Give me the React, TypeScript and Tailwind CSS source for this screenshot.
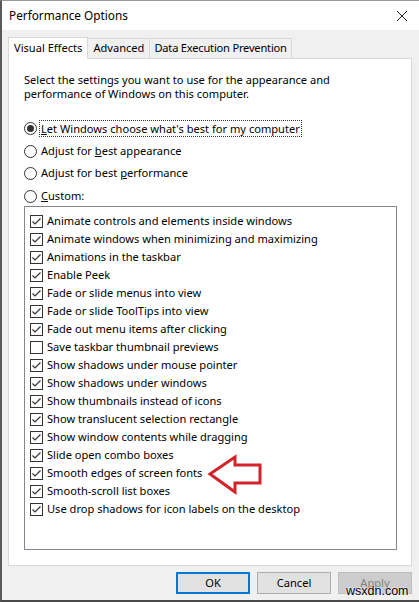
import React from 'react';

const effects: [string, boolean][] = [
  ['Animate controls and elements inside windows', true],
  ['Animate windows when minimizing and maximizing', true],
  ['Animations in the taskbar', true],
  ['Enable Peek', true],
  ['Fade or slide menus into view', true],
  ['Fade or slide ToolTips into view', true],
  ['Fade out menu items after clicking', true],
  ['Save taskbar thumbnail previews', false],
  ['Show shadows under mouse pointer', true],
  ['Show shadows under windows', true],
  ['Show thumbnails instead of icons', true],
  ['Show translucent selection rectangle', true],
  ['Show window contents while dragging', true],
  ['Slide open combo boxes', true],
  ['Smooth edges of screen fonts', true],
  ['Smooth-scroll list boxes', true],
  ['Use drop shadows for icon labels on the desktop', true],
];

function Radio({ checked, children }: { checked?: boolean; children: React.ReactNode }) {
  return (
    <div className="flex items-center h-[22.7px] whitespace-nowrap">
      <span className="w-[13px] h-[13px] rounded-full border border-[#333] bg-white flex items-center justify-center shrink-0">
        {checked && <span className="w-[7px] h-[7px] rounded-full bg-[#333]" />}
      </span>
      <span className={checked ? 'ml-[2px] px-[1px] border border-dotted border-[#333] leading-[15px]' : 'ml-[4px]'}>
        {children}
      </span>
    </div>
  );
}

function Checkbox({ checked, label }: { checked: boolean; label: string }) {
  return (
    <div className="flex items-center h-[18px] whitespace-nowrap">
      <span className="w-[13px] h-[13px] border border-[#333] bg-white flex items-center justify-center shrink-0">
        {checked && (
          <svg width="11" height="11" viewBox="0 0 11 11">
            <path d="M1.5 5.5 L4 8 L9.5 2.5" fill="none" stroke="#333" strokeWidth="1.2" />
          </svg>
        )}
      </span>
      <span className="ml-[4px]">{label}</span>
    </div>
  );
}

export default function App() {
  return (
    <div
      className="relative w-[419px] h-[602px] bg-[#f0f0f0] border-l-2 border-b-2 border-t border-l-[#5a5a5a] border-b-[#4a4a4a] border-t-[#9a9a9a] text-[11.1px] text-black overflow-hidden"
      style={{ fontFamily: '"Noto Sans", "Liberation Sans", sans-serif' }}
    >
      {/* Title bar */}
      <div className="h-[29px] bg-white flex items-center justify-between pl-[7px] pr-[11px]">
        <span className="text-[11.8px]">Performance Options</span>
        <svg width="12" height="12" viewBox="0 0 12 12">
          <path d="M1 1 L11 11 M11 1 L1 11" stroke="#222" strokeWidth="1" />
        </svg>
      </div>

      {/* Tabs */}
      <div className="flex items-end pl-[6px] pt-[6px] h-[28px] whitespace-nowrap">
        <div className="h-[22px] px-[5px] bg-white border border-b-0 border-[#d9d9d9] flex items-center relative z-10 -mb-px">
          Visual Effects
        </div>
        <div className="h-[20px] px-[5px] border border-l-0 border-b-0 border-[#d9d9d9] flex items-center">Advanced</div>
        <div className="h-[20px] px-[4px] border border-l-0 border-b-0 border-[#d9d9d9] flex items-center tracking-[-0.2px]">
          Data Execution Prevention
        </div>
      </div>

      {/* Panel */}
      <div className="ml-[6px] w-[404px] h-[508px] bg-white border border-[#d9d9d9] pl-[15px] pt-[14px]">
        <p className="leading-[14px]">
          Select the settings you want to use for the appearance and
          <br />
          performance of Windows on this computer.
        </p>
        <div className="mt-[16px]">
          <Radio checked>
            <u>L</u>et Windows choose what's best for my computer
          </Radio>
          <Radio>
            Adjust for <u>b</u>est appearance
          </Radio>
          <Radio>
            Adjust for best <u>p</u>erformance
          </Radio>
          <Radio>
            <u>C</u>ustom:
          </Radio>
        </div>
        <div className="mt-[-2px] w-[373px] h-[344px] border border-[#828790] pl-[5px] pt-[6px]">
          {effects.map(([label, checked]) => (
            <Checkbox key={label} checked={checked} label={label} />
          ))}
        </div>
      </div>

      {/* Buttons */}
      <div className="flex justify-end gap-[7px] pr-[7px] mt-[6px]">
        <button className="w-[74px] h-[22px] bg-[#e1e1e1] border-2 border-[#0078d7] leading-none">OK</button>
        <button className="w-[74px] h-[22px] bg-[#e1e1e1] border border-[#adadad] leading-none">Cancel</button>
        <button className="w-[74px] h-[22px] bg-[#cccccc] border border-[#bfbfbf] text-[#838383] leading-none">Apply</button>
      </div>

      {/* Red arrow annotation */}
      <svg className="absolute left-0 top-0 pointer-events-none" width="419" height="602">
        <polygon
          points="208,473 233,456 233,464 258,464 258,482 233,482 233,491"
          fill="none"
          stroke="#d3222a"
          strokeWidth="3"
          strokeLinejoin="miter"
        />
      </svg>

      {/* Watermark */}
      <span
        className="absolute left-[344px] top-[584px] text-[12.5px] leading-none text-black"
        style={{ fontFamily: '"Liberation Sans", sans-serif', textShadow: '0 0 2px #fff, 0 0 2px #fff' }}
      >
        wsxdn.com
      </span>
    </div>
  );
}
